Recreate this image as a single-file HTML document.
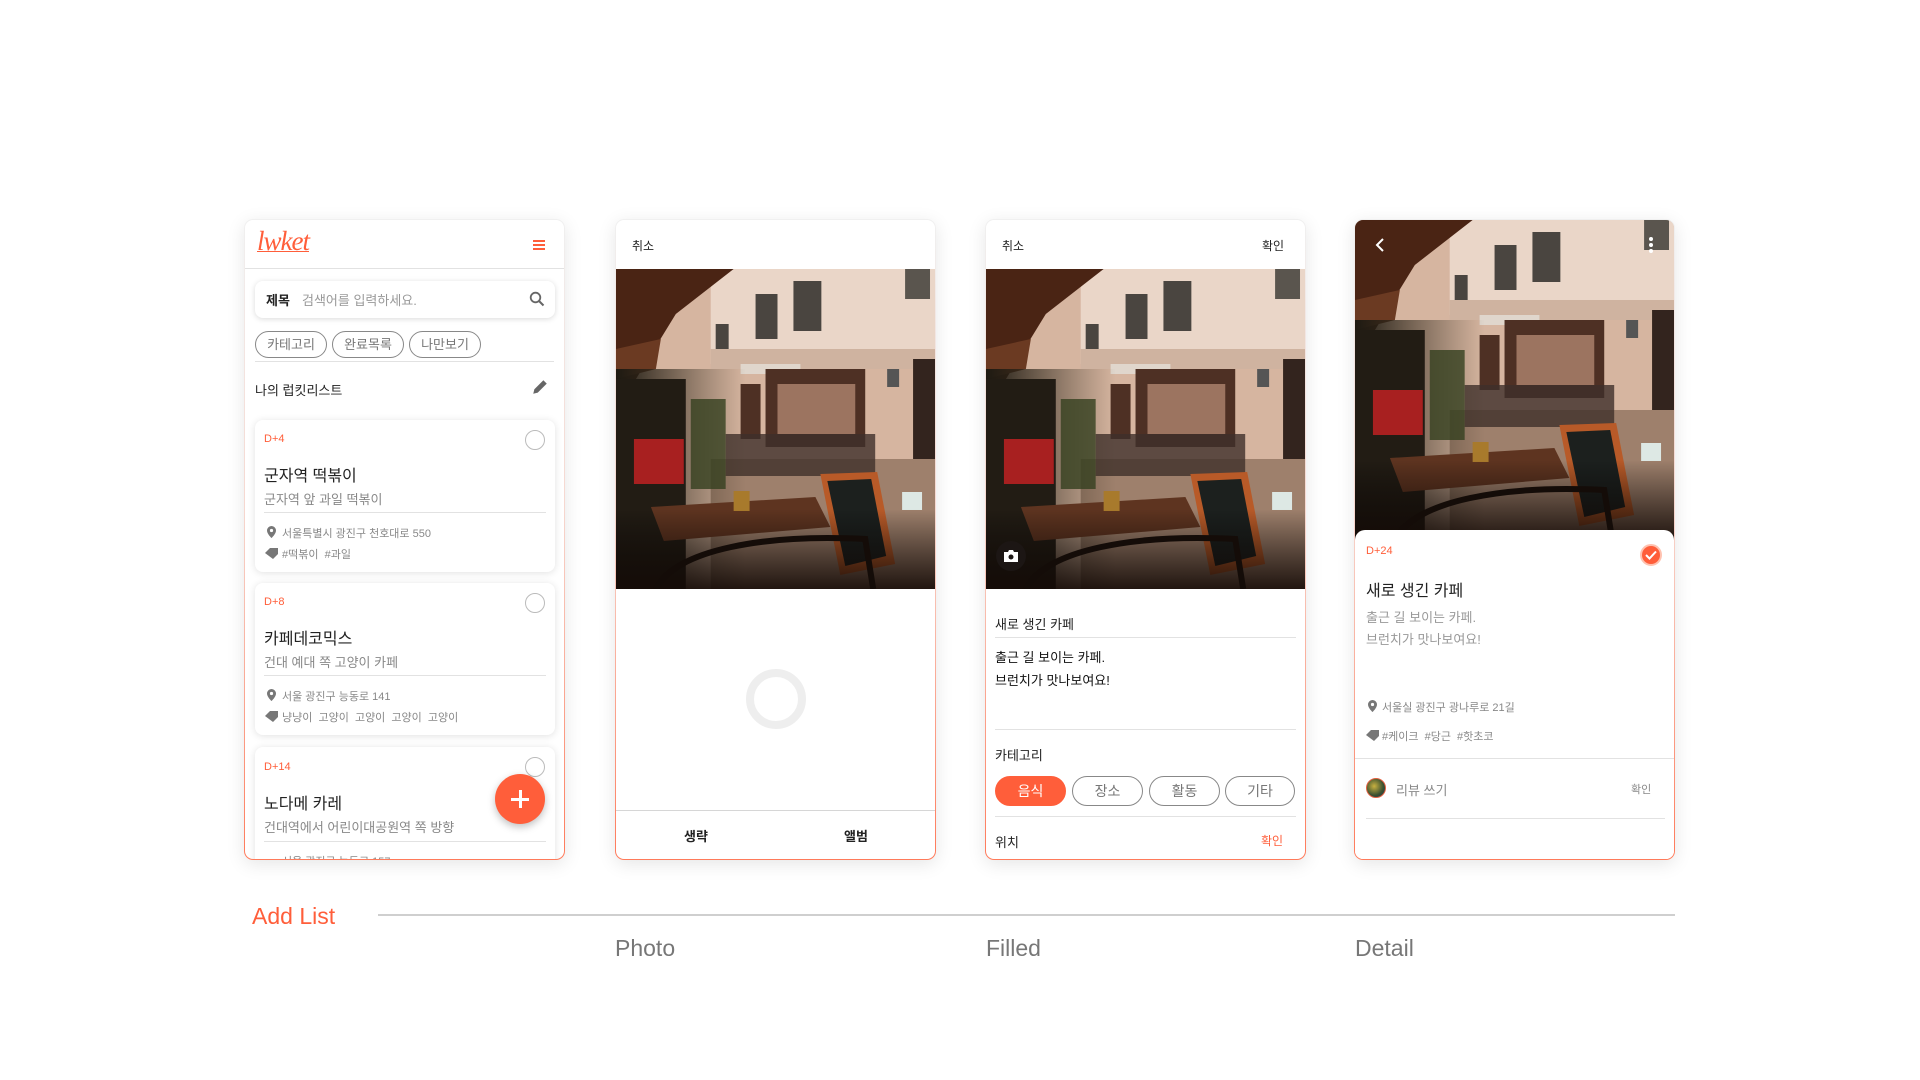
<!DOCTYPE html>
<html><head><meta charset="utf-8">
<style>
*{box-sizing:border-box;margin:0;padding:0}
body{width:1920px;height:1080px;background:#fff;position:relative;overflow:hidden;font-family:"Liberation Sans","Noto Sans CJK KR",sans-serif;color:#222}
.ph{position:absolute;top:219px;width:321px;height:641px;border-radius:9px;padding:1px;background:linear-gradient(180deg,#f0f0f0 0%,#f6d8d0 45%,#ff7a5a 100%);box-shadow:0 4px 18px rgba(0,0,0,.10)}
.in{position:relative;width:100%;height:100%;background:#fff;border-radius:8px;overflow:hidden}
.a{position:absolute;white-space:nowrap}
.hl{position:absolute;left:0;right:0;height:1px;background:#e2e2e2}
.or{color:#ff5e3a}
.card{position:absolute;left:10px;width:300px;background:#fff;border-radius:8px;box-shadow:0 1px 8px rgba(0,0,0,.12)}
.chip{position:absolute;height:27px;border:1px solid #888;border-radius:14px;font-size:13px;color:#777;text-align:center;line-height:25px}
.cc{position:absolute;height:30px;border:1px solid #888;border-radius:15px;font-size:14px;color:#777;text-align:center;line-height:28px}
.circ{position:absolute;width:20px;height:20px;border:1px solid #bbb;border-radius:50%}
.photo{position:absolute;left:0;width:319px;height:320px}
</style></head><body>

<svg width="0" height="0" style="position:absolute">
<defs>
<linearGradient id="gv" x1="0" y1="0" x2="0" y2="1"><stop offset="0" stop-color="#000" stop-opacity="0"/><stop offset="1" stop-color="#140a06" stop-opacity=".9"/></linearGradient>
<linearGradient id="gl" x1="0" y1="0" x2="1" y2="0"><stop offset="0" stop-color="#1e1a12"/><stop offset="1" stop-color="#3a3222" stop-opacity=".0"/></linearGradient>
<g id="pic">
<rect width="320" height="320" fill="#d6b5a0"/>
<rect x="95" y="0" width="225" height="95" fill="#ead6c8"/>
<rect x="140" y="25" width="22" height="45" fill="#4a4540"/>
<rect x="178" y="12" width="28" height="50" fill="#4a4540"/>
<rect x="290" y="0" width="25" height="30" fill="#5a554e"/>
<rect x="100" y="55" width="13" height="30" fill="#4a4540"/>
<rect x="95" y="80" width="225" height="20" fill="#cfb3a0"/>
<rect x="125" y="95" width="60" height="10" fill="#e0d6cc"/>
<rect x="150" y="100" width="100" height="78" fill="#4e3024"/>
<rect x="162" y="115" width="78" height="50" fill="#9c7460"/>
<rect x="125" y="115" width="20" height="55" fill="#4e3024"/>
<rect x="298" y="90" width="22" height="110" fill="#33241e"/>
<rect x="272" y="100" width="12" height="18" fill="#555"/>
<polygon points="0,0 118,0 60,45 20,110 0,120" fill="#4a2414"/>
<polygon points="0,80 45,70 40,100 0,110" fill="#6b3a22"/>
<polygon points="95,190 320,190 320,320 95,320" fill="#9e806c"/>
<rect x="110" y="165" width="150" height="42" fill="#3e302a" opacity=".8"/>
<rect x="0" y="100" width="130" height="220" fill="url(#gl)"/>
<rect x="0" y="110" width="70" height="210" fill="#221c14"/>
<rect x="18" y="170" width="50" height="45" fill="#a82020"/>
<rect x="75" y="130" width="35" height="90" fill="#35401f" opacity=".8"/>
<polygon points="35,238 200,228 215,258 48,272" fill="#5e3420"/>
<rect x="118" y="222" width="16" height="20" fill="#a87a2c"/>
<polygon points="205,205 262,203 280,295 225,306" fill="#b85a28"/>
<polygon points="212,212 256,210 271,287 230,297" fill="#1c201e"/>
<rect x="287" y="223" width="20" height="18" fill="#dde8e4"/>
<rect x="0" y="240" width="320" height="80" fill="url(#gv)"/>
<path d="M40 320 C60 280 150 265 250 270 L258 320" fill="none" stroke="#140c08" stroke-width="6"/>
</g>
</defs>
</svg>

<!-- Phone 1 -->
<div class="ph" style="left:244px"><div class="in">
  <div class="a or" style="left:12px;top:6px;font-family:'Liberation Serif',serif;font-style:italic;font-size:27px;letter-spacing:-1px;text-decoration:underline;text-decoration-thickness:1px">lwket</div>
  <div class="a" style="left:288px;top:20px;width:12px;height:2px;background:#ff5e3a;box-shadow:0 4px 0 #ff5e3a,0 8px 0 #ff5e3a"></div>
  <div class="hl" style="top:48px"></div>
  <div class="card" style="top:61px;height:37px;box-shadow:0 1px 6px rgba(0,0,0,.15)">
    <div class="a" style="left:11px;top:9px;font-size:13px;font-weight:bold;color:#222">제목</div>
    <div class="a" style="left:47px;top:9px;font-size:13px;color:#999">검색어를 입력하세요.</div>
    <svg class="a" style="left:274px;top:10px" width="16" height="16" viewBox="0 0 16 16"><circle cx="6.5" cy="6.5" r="4.8" fill="none" stroke="#666" stroke-width="1.8"/><path d="M10 10l4.5 4.5" stroke="#666" stroke-width="2"/></svg>
  </div>
  <div class="chip" style="left:10px;top:111px;width:72px">카테고리</div>
  <div class="chip" style="left:87px;top:111px;width:72px">완료목록</div>
  <div class="chip" style="left:164px;top:111px;width:72px">나만보기</div>
  <div class="hl" style="top:141px;left:10px;right:10px"></div>
  <div class="a" style="left:10px;top:160px;font-size:13px;color:#222">나의 럽킷리스트</div>
  <svg class="a" style="left:286px;top:158px" width="18" height="18" viewBox="0 0 16 16"><path d="M2 14l1-4 8-8 3 3-8 8z" fill="#666"/></svg>

  <div class="card" style="top:200px;height:152px">
    <div class="a or" style="left:9px;top:13px;font-size:11px">D+4</div>
    <div class="circ" style="left:270px;top:10px"></div>
    <div class="a" style="left:9px;top:42px;font-size:16px;color:#222">군자역 떡볶이</div>
    <div class="a" style="left:9px;top:69px;font-size:13px;color:#888">군자역 앞 과일 떡볶이</div>
    <div class="hl" style="top:92px;left:9px;right:9px"></div>
    <svg class="a" style="left:12px;top:106px" width="9" height="12" viewBox="0 0 9 12"><path d="M4.5 0A4.5 4.5 0 0 0 0 4.5C0 8 4.5 12 4.5 12S9 8 9 4.5A4.5 4.5 0 0 0 4.5 0z" fill="#777"/><circle cx="4.5" cy="4.5" r="1.6" fill="#fff"/></svg>
    <div class="a" style="left:27px;top:105px;font-size:11px;color:#888">서울특별시 광진구 천호대로 550</div>
    <svg class="a" style="left:10px;top:128px" width="13" height="11" viewBox="0 0 13 11"><path d="M0 5L5 0h8v6l-5 5z" fill="#777"/></svg>
    <div class="a" style="left:27px;top:126px;font-size:11px;color:#888">#떡볶이 &nbsp;#과일</div>
  </div>

  <div class="card" style="top:363px;height:152px">
    <div class="a or" style="left:9px;top:13px;font-size:11px">D+8</div>
    <div class="circ" style="left:270px;top:10px"></div>
    <div class="a" style="left:9px;top:42px;font-size:16px;color:#222">카페데코믹스</div>
    <div class="a" style="left:9px;top:69px;font-size:13px;color:#888">건대 예대 쪽 고양이 카페</div>
    <div class="hl" style="top:92px;left:9px;right:9px"></div>
    <svg class="a" style="left:12px;top:106px" width="9" height="12" viewBox="0 0 9 12"><path d="M4.5 0A4.5 4.5 0 0 0 0 4.5C0 8 4.5 12 4.5 12S9 8 9 4.5A4.5 4.5 0 0 0 4.5 0z" fill="#777"/><circle cx="4.5" cy="4.5" r="1.6" fill="#fff"/></svg>
    <div class="a" style="left:27px;top:105px;font-size:11px;color:#888">서울 광진구 능동로 141</div>
    <svg class="a" style="left:10px;top:128px" width="13" height="11" viewBox="0 0 13 11"><path d="M0 5L5 0h8v6l-5 5z" fill="#777"/></svg>
    <div class="a" style="left:27px;top:126px;font-size:11px;color:#888">냥냥이 &nbsp;고양이 &nbsp;고양이 &nbsp;고양이 &nbsp;고양이</div>
  </div>

  <div class="card" style="top:527px;height:152px">
    <div class="a or" style="left:9px;top:14px;font-size:11px">D+14</div>
    <div class="circ" style="left:270px;top:10px"></div>
    <div class="a" style="left:9px;top:43px;font-size:16px;color:#222">노다메 카레</div>
    <div class="a" style="left:9px;top:70px;font-size:13px;color:#888">건대역에서 어린이대공원역 쪽 방향</div>
    <div class="hl" style="top:94px;left:9px;right:9px"></div>
    <div class="a" style="left:27px;top:106px;font-size:11px;color:#888">서울 광진구 능동로 157</div>
  </div>
  <div class="a" style="left:250px;top:554px;width:50px;height:50px;border-radius:50%;background:#ff5e3a;box-shadow:0 3px 8px rgba(0,0,0,.25)">
    <div class="a" style="left:16px;top:24px;width:18px;height:2.5px;background:#fff"></div>
    <div class="a" style="left:24px;top:16px;width:2.5px;height:18px;background:#fff"></div>
  </div>
</div></div>

<!-- Phone 2 -->
<div class="ph" style="left:615px"><div class="in">
  <div class="a" style="left:16px;top:17px;font-size:12px;color:#222">취소</div>
  <svg class="photo" style="top:49px" viewBox="0 0 320 320" preserveAspectRatio="none"><use href="#pic"/></svg>
  <div class="a" style="left:130px;top:449px;width:60px;height:60px;border-radius:50%;border:8px solid #eee"></div>
  <div class="hl" style="top:590px;background:#d6d6d6"></div>
  <div class="a" style="left:68px;top:606px;font-size:13px;font-weight:bold;color:#222">생략</div>
  <div class="a" style="left:228px;top:606px;font-size:13px;font-weight:bold;color:#222">앨범</div>
</div></div>

<!-- Phone 3 -->
<div class="ph" style="left:985px"><div class="in">
  <div class="a" style="left:16px;top:17px;font-size:12px;color:#222">취소</div>
  <div class="a" style="left:276px;top:17px;font-size:12px;color:#222">확인</div>
  <svg class="photo" style="top:49px" viewBox="0 0 320 320" preserveAspectRatio="none"><use href="#pic"/></svg>
  <div class="a" style="left:10px;top:321px;width:30px;height:30px;border-radius:50%;background:#1c1614">
    <svg class="a" style="left:8px;top:9px" width="14" height="12" viewBox="0 0 14 12"><path d="M0 2h4l1-2h4l1 2h4v10H0z" fill="#fff"/><circle cx="7" cy="7" r="2.5" fill="#1c1614"/></svg>
  </div>
  <div class="a" style="left:9px;top:394px;font-size:13px;color:#222">새로 생긴 카페</div>
  <div class="hl" style="top:417px;left:9px;right:9px"></div>
  <div class="a" style="left:9px;top:426px;font-size:13px;color:#111;line-height:23px">출근 길 보이는 카페.<br>브런치가 맛나보여요!</div>
  <div class="hl" style="top:509px;left:9px;right:9px"></div>
  <div class="a" style="left:9px;top:525px;font-size:13px;color:#222">카테고리</div>
  <div class="cc" style="left:9px;top:556px;width:71px;background:#ff5e3a;border-color:#ff5e3a;color:#fff">음식</div>
  <div class="cc" style="left:86px;top:556px;width:71px">장소</div>
  <div class="cc" style="left:163px;top:556px;width:71px">활동</div>
  <div class="cc" style="left:239px;top:556px;width:70px">기타</div>
  <div class="hl" style="top:596px;left:9px;right:9px"></div>
  <div class="a" style="left:9px;top:612px;font-size:13px;color:#222">위치</div>
  <div class="a or" style="left:275px;top:612px;font-size:12px">확인</div>
</div></div>

<!-- Phone 4 -->
<div class="ph" style="left:1354px"><div class="in">
  <svg class="photo" style="top:0" viewBox="0 0 320 320" preserveAspectRatio="none"><use href="#pic"/></svg>
  <svg class="a" style="left:20px;top:18px" width="10" height="14" viewBox="0 0 10 14"><path d="M8 1L2 7l6 6" fill="none" stroke="#fff" stroke-width="2"/></svg>
  <div class="a" style="left:294px;top:17px;width:4px;height:4px;border-radius:50%;background:#fff;box-shadow:0 6px 0 #fff,0 12px 0 #fff"></div>
  <div class="a" style="left:0;top:310px;width:319px;height:330px;background:#fff;border-radius:10px 10px 0 0">
    <div class="a or" style="left:11px;top:15px;font-size:11px">D+24</div>
    <div class="a" style="left:285px;top:14px;width:22px;height:22px;border-radius:50%;background:#ff5e3a;border:2px solid #ffc2b0">
      <svg class="a" style="left:3px;top:4px" width="12" height="10" viewBox="0 0 12 10"><path d="M1 5l3.5 3.5L11 1.5" fill="none" stroke="#fff" stroke-width="2"/></svg>
    </div>
    <div class="a" style="left:11px;top:47px;font-size:16px;color:#222">새로 생긴 카페</div>
    <div class="a" style="left:11px;top:77px;font-size:13px;color:#999;line-height:22px">출근 길 보이는 카페.<br>브런치가 맛나보여요!</div>
    <svg class="a" style="left:13px;top:170px" width="9" height="12" viewBox="0 0 9 12"><path d="M4.5 0A4.5 4.5 0 0 0 0 4.5C0 8 4.5 12 4.5 12S9 8 9 4.5A4.5 4.5 0 0 0 4.5 0z" fill="#777"/><circle cx="4.5" cy="4.5" r="1.6" fill="#fff"/></svg>
    <div class="a" style="left:27px;top:169px;font-size:11px;color:#888">서울실 광진구 광나루로 21길</div>
    <svg class="a" style="left:11px;top:200px" width="13" height="11" viewBox="0 0 13 11"><path d="M0 5L5 0h8v6l-5 5z" fill="#777"/></svg>
    <div class="a" style="left:27px;top:198px;font-size:11px;color:#888">#케이크 &nbsp;#당근 &nbsp;#핫초코</div>
    <div class="hl" style="top:228px"></div>
    <div class="a" style="left:11px;top:248px;width:20px;height:20px;border-radius:50%;background:radial-gradient(circle at 40% 40%,#c8b040,#3a5030 60%,#203050);border:1px solid #e06040"></div>
    <div class="a" style="left:41px;top:250px;font-size:13px;color:#888">리뷰 쓰기</div>
    <div class="a" style="left:276px;top:251px;font-size:11px;color:#888">확인</div>
    <div class="hl" style="top:288px;left:11px;right:9px"></div>
  </div>
</div></div>

<div class="a or" style="left:252px;top:903px;font-size:23px;color:#ff5e3a">Add List</div>
<div class="a" style="left:378px;top:914px;width:1297px;height:2px;background:#cfcfcf"></div>
<div class="a" style="left:615px;top:935px;font-size:23px;color:#777">Photo</div>
<div class="a" style="left:986px;top:935px;font-size:23px;color:#777">Filled</div>
<div class="a" style="left:1355px;top:935px;font-size:23px;color:#777">Detail</div>
</body></html>
